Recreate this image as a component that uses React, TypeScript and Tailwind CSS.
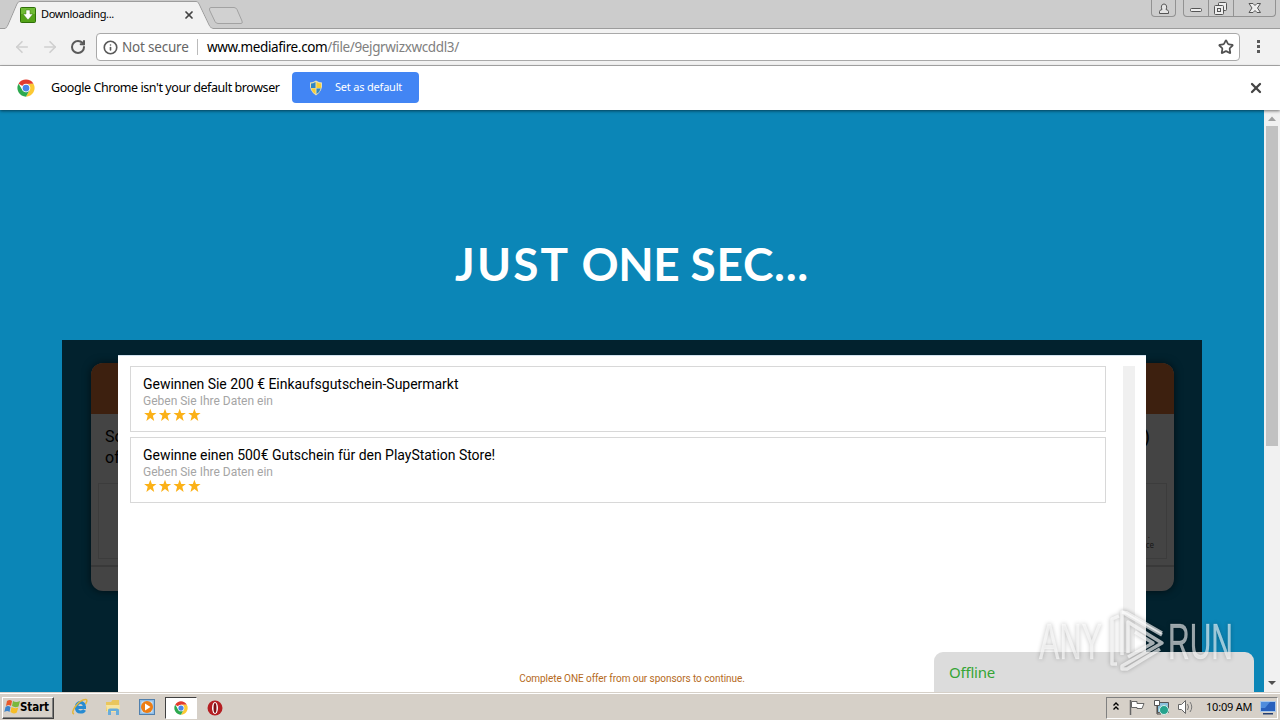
import { Star, RotateCw, ArrowLeft, ArrowRight, Info, X } from 'lucide-react';

const offers = [
  { title: 'Gewinnen Sie 200 € Einkaufsgutschein-Supermarkt', spacing: 'tracking-[-0.03px]' },
  { title: 'Gewinne einen 500€ Gutschein für den PlayStation Store!', spacing: 'tracking-[-0.02px]' },
];

const ChromeLogo = ({ className }: { className: string }) => (
  <svg className={className} viewBox="0 0 48 48">
    <circle cx="24" cy="24" r="23" fill="#fff" />
    <path d="M24 24 L4.1 12.5 A23 23 0 0 1 43.9 12.5 L24 13 Z" fill="#e33b2e" />
    <path d="M43.9 12.5 A23 23 0 0 1 24 47 L33.5 29.5 L24 13 Z" fill="#fcc934" />
    <path d="M4.1 12.5 A23 23 0 0 0 24 47 L33.5 29.5 L24 35 L14.5 29.5 Z" fill="#2da94f" />
    <circle cx="24" cy="24" r="11.5" fill="#fff" />
    <circle cx="24" cy="24" r="9" fill="#4a86e8" />
  </svg>
);

const TabStrip = () => (
  <div className="relative h-[29px] bg-[#cccccc] flex items-start">
    <svg className="absolute inset-0" width="1280" height="29" viewBox="0 0 1280 29">
      <path d="M0 28.5H5Q7 28 8 25L17 4Q18 1.5 20 1.5H196Q198 1.5 199 4L209 25Q210 28.5 213 28.5H1280" fill="none" stroke="#9c9c9c" />
      <path d="M5 29Q7 28 8.5 25L17.5 4Q18.5 2 20 2H196Q198 2 198.5 4L208.5 25Q210 28 213 29Z" fill="#f2f2f2" />
      <path d="M211 7.5H234Q236 7.5 237 9.5L242 21Q243 23.5 241 23.5H218Q216 23.5 215 21.5L209.5 10Q209 7.5 211 7.5Z" fill="#d1d1d1" stroke="#a2a2a2" />
    </svg>
    <div className="relative flex items-center h-[29px] w-[211px] pl-5">
      <svg width="16" height="16" viewBox="0 0 16 16">
        <rect x=".5" y=".5" width="15" height="15" rx="1" fill="#53a318" stroke="#2f6f09" />
        <rect x="1" y="1" width="14" height="6" fill="#6fbb35" />
        <path d="M6 3h4v4h3l-5 6-5-6h3z" fill="#fff" stroke="#397b12" strokeWidth=".5" />
      </svg>
      <span className="ml-[5px] mb-px text-[11px] leading-4 tracking-[-0.33px] text-black">Downloading...</span>
      <X className="absolute left-[183px] top-[9px]" size={12} strokeWidth={3.5} color="#444" />
    </div>
    <div className="relative ml-auto mr-1 flex">
      <div className="mr-[7px] h-[17px] w-[25px] rounded-b border border-t-0 border-[#929292] flex items-center justify-center">
        <svg width="12" height="13" viewBox="0 0 12 13" fill="#e4e4e4" stroke="#555">
          <path d="M1.5 11.5V9.5Q1.5 8 4 7.5Q3 6 3.5 4Q4 2 6 2T8.5 4Q9 6 8 7.5Q10.5 8 10.5 9.5V11.5Z" />
        </svg>
      </div>
      <div className="h-[17px] w-[93px] rounded-b border border-t-0 border-[#929292]">
        <svg width="91" height="16" viewBox="0 0 91 16" fill="#eee" stroke="#555">
          <path d="M24.5 0V16M49.5 0V16" stroke="#929292" />
          <rect x="6.5" y="8.5" width="11" height="3" rx="1" />
          <rect x="34.5" y="2.5" width="8" height="8" rx="1" />
          <rect x="30.5" y="5.5" width="9" height="9" rx="1" />
          <rect x="33.5" y="8.5" width="3" height="3" />
          <path d="M65 3.5H69L71 5.5L73 3.5H76.5L73.5 8L76.5 12.5H73L71 10.5L69 12.5H65L68 8Z" />
        </svg>
      </div>
    </div>
  </div>
);

const Toolbar = () => (
  <div className="h-[37px] bg-[#f2f2f2] border-b border-[#b0b0b0] flex items-center pl-[13px]">
    <ArrowLeft size={18} strokeWidth={2.2} color="#cfcfcf" />
    <ArrowRight className="ml-[10px]" size={18} strokeWidth={2.2} color="#cfcfcf" />
    <RotateCw className="ml-[11px]" size={16} strokeWidth={3} color="#5a5a5a" />
    <div className="ml-[10px] h-7 w-[1144px] rounded-sm border border-[#a9a9a9] bg-white flex items-center pl-[6px]">
      <Info size={15} strokeWidth={2.6} color="#5a5a5a" />
      <span className="ml-1 w-[68px] text-[13.5px] tracking-[-0.2px] whitespace-nowrap text-[#666]">Not secure</span>
      <span className="ml-[7px] h-4 w-px bg-[#bbb]" />
      <span className="ml-[9px] text-[13.5px] tracking-[-0.36px] text-black whitespace-nowrap">
        www.mediafire.com<span className="text-[#808080]">/file/9ejgrwizxwcddl3/</span>
      </span>
      <Star className="ml-auto mr-[5px]" size={16} strokeWidth={2.6} color="#505050" />
    </div>
    <svg className="ml-[17px]" width="3" height="14" viewBox="0 0 3 14" fill="#5a5a5a">
      <rect x="0" y="0" width="3" height="3" />
      <rect x="0" y="5" width="3" height="3" />
      <rect x="0" y="10" width="3" height="3" />
    </svg>
  </div>
);

const InfoBar = () => (
  <div className="relative z-10 h-11 bg-white flex items-center pl-[17px] shadow-[0_1px_3px_rgba(0,0,0,0.55)]">
    <ChromeLogo className="w-[18px] h-[18px]" />
    <span className="ml-4 w-[229px] text-[12.5px] tracking-[-0.43px] whitespace-nowrap text-black">Google Chrome isn't your default browser</span>
    <button className="ml-3 mb-px h-[31px] w-[127px] rounded-sm bg-[#4285f4] flex items-center pl-4 text-white">
      <svg width="16" height="16" viewBox="0 0 16 16">
        <path d="M8 .5Q11 2.5 14 2.5Q15 11 8 15.5Q1 11 2 2.5Q5 2.5 8 .5Z" fill="#e7e0b5" />
        <path d="M7.5 2Q5 3.5 3 3.5V8H7.5Z" fill="#2f86c3" />
        <path d="M8.5 2Q11 3.5 13 3.5V8H8.5Z" fill="#f8ce35" />
        <path d="M3.3 8.5H7.5V14Q4 12 3.3 8.5Z" fill="#f8ce35" />
        <path d="M12.7 8.5H8.5V14Q12 12 12.7 8.5Z" fill="#2f86c3" />
      </svg>
      <span className="ml-[11px] text-[11px] tracking-[-0.2px] whitespace-nowrap">Set as default</span>
    </button>
    <X className="ml-auto mr-4" size={16} strokeWidth={3.4} color="#444" />
  </div>
);

const Stars = () => (
  <svg className="-mt-px" width="60" height="14" viewBox="0 0 60 14" fill="#fbb117">
    {[0, 1, 2, 3].map((i) => (
      <path key={i} transform={`translate(${i * 14.7} 0)`} d="M7.3 .7L8.9 5H13.5L9.9 7.8L11.2 12.9L7.3 10L3.4 12.9L4.7 7.8L1.1 5H5.7Z" />
    ))}
  </svg>
);

// Card that sits dimmed behind the offer dialog
const BackCard = () => (
  <div className="absolute left-[29px] top-[23px] w-[1083px] h-[228px] rounded-xl bg-[#444444] overflow-hidden shadow-[0_0_8px_rgba(0,0,0,0.6)] flex flex-col">
    <div className="h-[51px] bg-[#3d200f]" />
    <div className="flex-1 px-[7px] pt-3 flex flex-col">
      <div className="flex justify-between px-[7px] text-[16px] leading-[21px] text-black font-['Roboto',sans-serif]">
        <span>So<br />of</span>
        <span className="mr-[10px] text-[18px]">)</span>
      </div>
      <div className="mt-[15px] h-[76px] border border-[#3c3c3c] flex flex-col items-end justify-end pr-3 pb-2 text-[8px] leading-[10px] text-[#181818]">
        <span className="pr-1">.</span>
        <span>ce</span>
      </div>
    </div>
    <div className="h-[26px] border-t-2 border-[#393939]" />
  </div>
);

const OfferDialog = () => (
  <div className="relative ml-14 mt-[15px] w-[1028px] h-[337px] bg-white border-t border-[#d2e2ef] flex flex-col font-['Roboto',sans-serif]">
    <div className="mt-[10px] ml-3 flex h-[300px]">
      <div className="w-[976px] flex flex-col gap-[5px]">
        {offers.map((offer) => (
          <div key={offer.title} className="h-[66px] border border-[#d8d8d8] pl-3 pt-[9px]">
            <div className={`text-[14px] leading-[17px] text-black ${offer.spacing}`}>{offer.title}</div>
            <div className="text-[12px] leading-4 text-[#a5a5a5]">Geben Sie Ihre Daten ein</div>
            <Stars />
          </div>
        ))}
      </div>
      <div className="ml-[17px] w-3 bg-[#f0f0f0]" />
    </div>
    <div className="text-center text-[10px] leading-[14px] tracking-[-0.06px] text-[#b56a1c] mt-[6px]">Complete ONE offer from our sponsors to continue.</div>
  </div>
);

const PageScrollbar = () => (
  <div className="w-4 bg-[#f1f1f1] flex flex-col items-center">
    <svg width="16" height="16" viewBox="0 0 16 16"><path d="M4 11L8 6.5L12 11Z" fill="#a0a0a0" /></svg>
    <div className="w-3 h-80 bg-[#c1c1c1]" />
    <svg className="mt-auto" width="16" height="16" viewBox="0 0 16 16"><path d="M4 5L8 9L12 5Z" fill="#505050" /></svg>
  </div>
);

const Watermark = () => (
  <svg className="absolute left-[1030px] top-[490px] z-20 overflow-visible drop-shadow-[0_0_2px_rgba(0,0,0,0.4)]" width="250" height="80" viewBox="0 0 250 80">
    <g fill="#fff" fillOpacity=".6" stroke="#fff" strokeOpacity=".3" strokeWidth=".6" fontFamily="Liberation Sans Narrow, Liberation Sans, sans-serif" fontSize="50">
      <text x="9" y="59" textLength="63" lengthAdjust="spacingAndGlyphs">ANY</text>
      <text x="138" y="59" textLength="65" lengthAdjust="spacingAndGlyphs">RUN</text>
    </g>
    <g fill="none" stroke="#fff" strokeOpacity=".65" strokeWidth="3.5" strokeLinejoin="round">
      <path d="M89 16L82 19V64H87M92 55V12L132 35" />
      <path d="M92 12L97 13L132 33M98 53V22L132 43L92 66V69L97 69L130 49M98 57L123 43L105 32" />
    </g>
  </svg>
);

const Taskbar = () => (
  <div className="relative z-30 h-7 bg-[#d6d0c8] border-t border-[#d6d0c8] shadow-[inset_0_1px_0_#fff] flex items-center">
    <button className="ml-0.5 mt-0.5 h-[22px] w-[52px] bg-[#d6d0c8] border border-t-white border-l-white border-r-[#404040] border-b-[#404040] shadow-[inset_-1px_-1px_0_#808080] flex items-center pl-px">
      <svg className="mb-px shrink-0" width="16" height="16" viewBox="0 0 16 16">
        <path d="M3 2Q6 0 8 2L7 7Q5 5 2 7Z" fill="#e8582a" />
        <path d="M9 2Q12 4 16 2L14.5 7.5Q11 9 8 7Z" fill="#79b83d" />
        <path d="M1.5 8Q4 6 6.5 8L5.5 13Q3.5 11 .3 13Z" fill="#3a83cc" />
        <path d="M7.5 8Q10.5 10 14.3 8.5L12.8 13.5Q9.5 15.5 6.5 13Z" fill="#f6bd27" />
      </svg>
      <span className="text-[11.5px] font-bold text-black font-['DejaVu_Sans_Condensed','DejaVu_Sans',sans-serif] tracking-[-0.1px]">Start</span>
    </button>
    <svg className="ml-[17px]" width="18" height="18" viewBox="0 0 18 18" fill="none">
      <path d="M15 9.5H5.5Q5.5 14 9.5 14Q12.5 14 13.5 12M5.5 8Q6.5 4.5 9.5 4.5T13.5 8" stroke="#278bd2" strokeWidth="3.2" />
      <path d="M3 16Q0 15 4 9Q10 1 15 1.5Q17 2 14.5 6" stroke="#e2b63b" strokeWidth="1.5" />
    </svg>
    <svg className="ml-4 mt-0.5" width="17" height="17" viewBox="0 0 17 17">
      <path d="M1 3H6L7.5 1H14V12H1Z" fill="#e9c65d" />
      <path d="M1 6H15L14 13H2Z" fill="#f7e49e" />
      <path d="M3 16V11Q3 9.5 5 9.5H12Q14 9.5 14 11V16H11V12H6V16Z" fill="#69addb" />
    </svg>
    <svg className="ml-[17px] mt-0.5" width="17" height="17" viewBox="0 0 17 17">
      <rect x=".5" y=".5" width="15" height="15" fill="#8fbde7" stroke="#5180ad" />
      <rect x="2.5" y="2.5" width="11" height="11" fill="#d7e9f6" />
      <circle cx="8" cy="8" r="6" fill="#ed7d14" />
      <path d="M6 4.5L11.5 8L6 11.5Z" fill="#fff" />
    </svg>
    <div className="ml-[9px] mt-0.5 h-[22px] w-8 bg-white border border-t-[#404040] border-l-[#404040] border-r-white border-b-white flex items-center justify-center">
      <ChromeLogo className="w-[14px] h-[14px]" />
    </div>
    <svg className="ml-[10px] mt-0.5" width="16" height="16" viewBox="0 0 16 16">
      <circle cx="8" cy="8" r="7.5" fill="#b51e22" />
      <ellipse cx="8" cy="8" rx="3" ry="6" fill="#fff" />
      <ellipse cx="8" cy="8" rx="1.5" ry="5" fill="#7f1014" />
    </svg>
    <div className="ml-auto mt-0.5 mr-0.5 w-[172px] h-[22px] border border-[#808080] border-r-white border-b-white flex items-center">
      <svg className="ml-1 mb-0.5" width="84" height="18" viewBox="0 0 84 18">
        <path d="M2.5 7.5L5 5L7.5 7.5M2.5 11.5L5 9L7.5 11.5" fill="none" stroke="#000" strokeWidth="1.4" />
        <path d="M19.5 2V17" stroke="#666" strokeWidth="1.5" />
        <path d="M20.5 3.5H26V5.5H33L31 10.5H26V9.5H20.5Z" fill="#fff" stroke="#666" />
        <path d="M46.5 4.5H57.5V14.5H46.5Z" fill="#8ac1dc" stroke="#555" />
        <circle cx="53" cy="12" r="4.5" fill="#25a38d" stroke="#d7eee8" />
        <path d="M43.5 2.5H48.5V7.5H43.5Z" fill="#fff" stroke="#555" />
        <path d="M46 7.5V16H50" fill="none" stroke="#444" />
        <path d="M67.5 6.5H70.5L74.5 2.5V15.5L70.5 11.5H67.5Z" fill="#fff" stroke="#666" />
        <path d="M76.5 6Q78.5 9 76.5 12M79 4Q82.5 9 79 14" fill="none" stroke="#777" />
      </svg>
      <span className="ml-[11px] w-[47px] text-[11px] tracking-[-0.2px] whitespace-nowrap text-black">10:09 AM</span>
      <svg className="ml-[7px]" width="16" height="14" viewBox="0 0 16 14">
        <rect x=".5" y=".5" width="15" height="10" fill="#2860bd" stroke="#a8c7e9" />
        <path d="M1 1H10L5 7H1Z" fill="#4e8cdd" />
        <rect x="3" y="12" width="10" height="1.5" fill="#243e70" />
      </svg>
    </div>
  </div>
);

export default function App() {
  return (
    <div className="w-[1280px] h-[720px] overflow-hidden flex flex-col font-['Noto_Sans','Open_Sans',sans-serif]">
      <TabStrip />
      <Toolbar />
      <InfoBar />
      <div className="relative flex h-[582px]">
        <main className="w-[1264px] bg-[#0b86b7] flex flex-col overflow-hidden">
          <h1 className="mt-[124px] h-[60px] text-center text-[46px] leading-[60px] font-bold text-white font-['Lato',sans-serif]">
            <span className="tracking-[2.1px]">JUST</span> <span className="tracking-[-0.4px]">ONE</span>{' '}
            <span className="tracking-[0.7px]">SEC...</span>
          </h1>
          <div className="relative ml-[62px] mt-[46px] w-[1140px] h-[352px] bg-[#02222e]">
            <BackCard />
            <div className="flex">
              <OfferDialog />
            </div>
          </div>
        </main>
        <PageScrollbar />
        <div className="absolute left-[934px] bottom-0 w-80 h-10 rounded-t-[9px] bg-[#dcdcdc] pl-[15px] flex items-center text-[15px] tracking-[-0.2px] text-[#35a536]">Offline</div>
        <Watermark />
      </div>
      <Taskbar />
    </div>
  );
}
